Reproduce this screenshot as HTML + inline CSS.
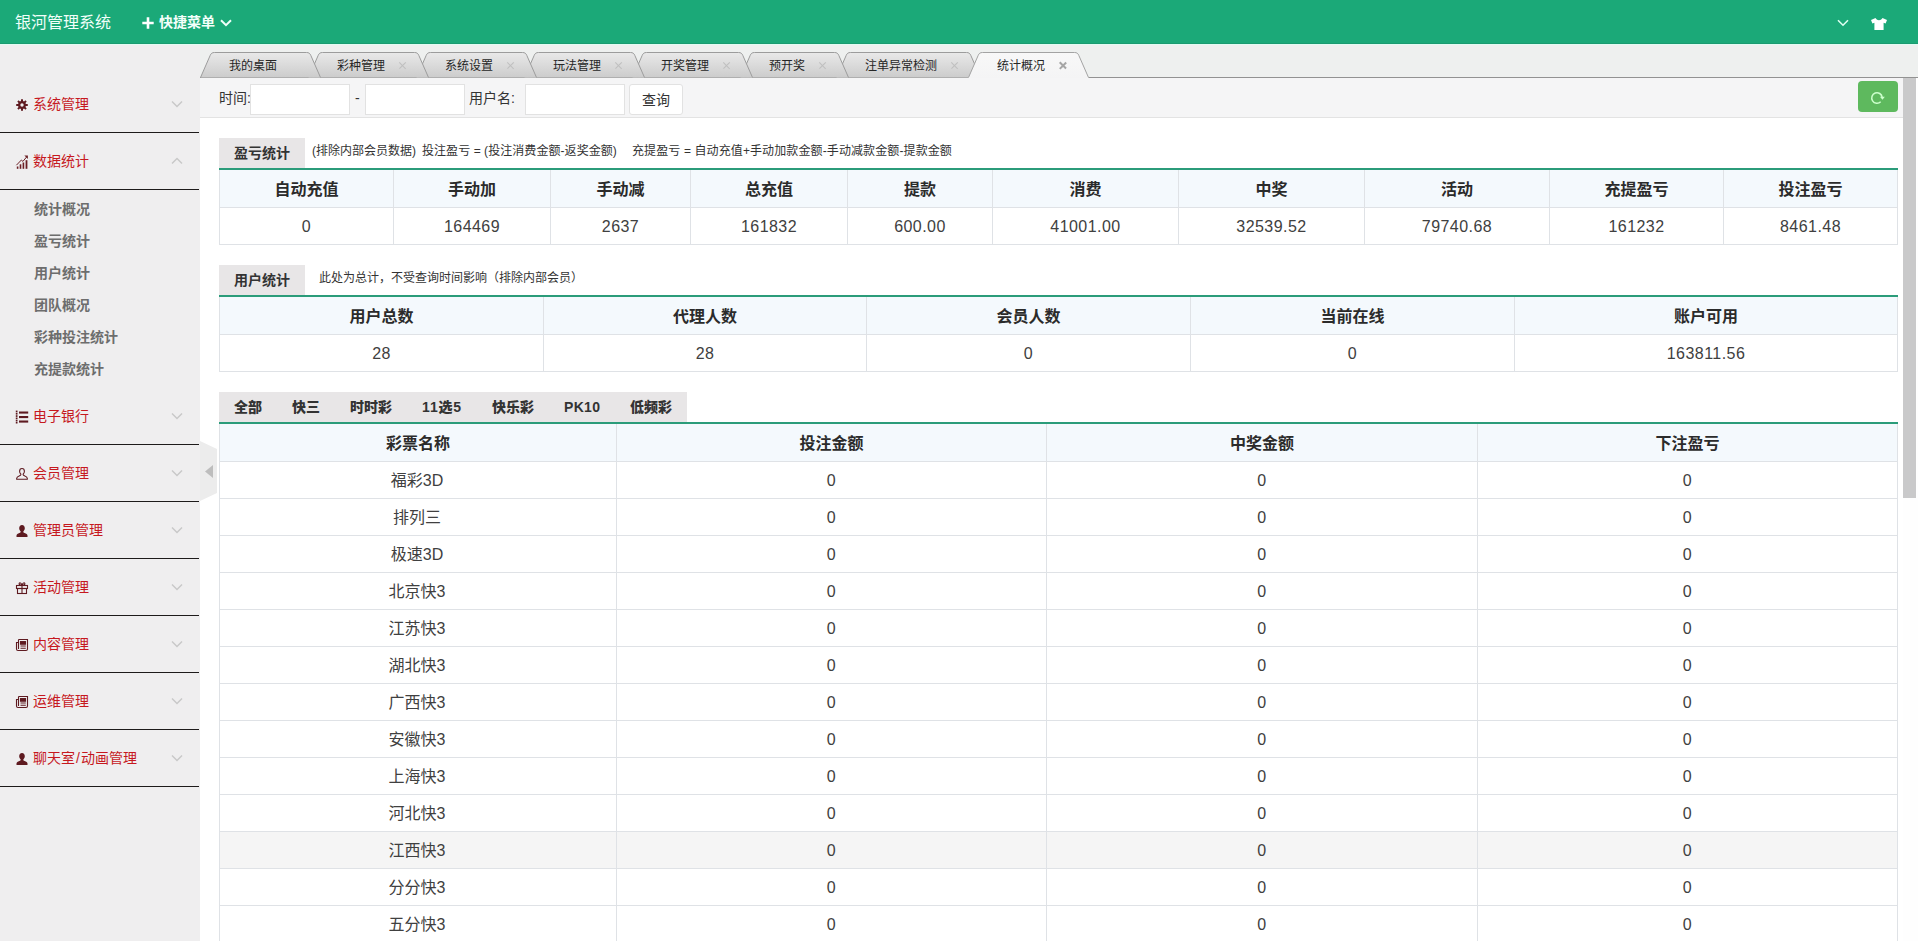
<!DOCTYPE html>
<html lang="zh-CN"><head><meta charset="utf-8"><title>银河管理系统</title>
<style>
*{box-sizing:border-box;margin:0;padding:0}
html,body{width:1918px;height:941px;overflow:hidden;background:#fff}
body{position:relative;font-family:"Liberation Sans","Noto Sans CJK SC",sans-serif;font-size:14px;color:#333}
#hd{position:absolute;left:0;top:0;width:1918px;height:44px;background:#1ba978;border-bottom:1px solid #1a9b70}
#hl{position:absolute;left:0;top:44px;width:1918px;height:1px;background:#e2fbf2;z-index:3}
#hd .logo{position:absolute;left:15px;top:1px;line-height:43px;font-size:16px;color:#f2fffa}
#hd .qm{position:absolute;left:159px;top:1px;line-height:43px;font-size:14px;color:#f4fffb;font-weight:bold}
#hd svg{position:absolute}
#side{position:absolute;left:0;top:44px;width:200px;height:897px;background:#efeeef}
.mi{position:absolute;left:0;width:199px;height:57px;border-bottom:1px solid #1d1a1a}
.mi .ic{position:absolute;left:15px;top:21.5px;width:14px;height:14px}
.mi span{position:absolute;left:33px;top:1px;line-height:55px;font-size:14px;color:#c6181e;white-space:nowrap}
.mi span i{font-style:normal;padding:0 1px}
.mi .chev{position:absolute;left:171px;top:24px;width:12px;height:8px}
.sub{position:absolute;left:34px;line-height:20px;height:20px;font-size:14px;font-weight:bold;color:#6d6d6d;white-space:nowrap}
#tabbar{position:absolute;left:200px;top:44px;width:1718px;height:34px;background:#eef0ef;border-bottom:1px solid #929292}
.tab{position:absolute;top:52px;height:26px}
.tab svg{position:absolute;left:0;top:0}
.tab span{position:absolute;top:1px;line-height:27px;font-size:12px;color:#262626;white-space:nowrap}
.tab .cx{position:absolute;top:10px;width:8px;height:8px}
.tab .cx:before,.tab .cx:after{content:"";position:absolute;left:3.4px;top:-0.6px;width:1.2px;height:9.2px;background:#bfbfbf;transform:rotate(45deg)}
.tab .cx:after{transform:rotate(-45deg)}
.tab.act .cx:before,.tab.act .cx:after{background:#a5a5a5;width:1.5px}
#flt{position:absolute;left:200px;top:78px;width:1703px;height:40px;background:#f5f5f6;border-bottom:1px solid #e3e3e3}
#flt .lb{position:absolute;top:1px;line-height:39px;font-size:14px;color:#333}
#flt .inp{position:absolute;top:6px;height:31px;width:100px;background:#fff;border:1px solid #e2e2e2}
#flt .btn{position:absolute;left:429px;top:6px;width:54px;height:31px;background:#fff;border:1px solid #e2e2e2;border-radius:3px;text-align:center;line-height:30px;font-size:14px;color:#333}
#flt .rf{position:absolute;left:1658px;top:3px;width:40px;height:31px;background:#5eb95e;border-radius:4px}
#sb{position:absolute;left:1903px;top:78px;width:15px;height:863px;background:#fefefe}
#sb i{position:absolute;left:0px;top:0;width:13px;height:420px;background:#c9c9ca}
.st{position:absolute;left:219px;height:30px;background:#e8e6e7;font-weight:bold;font-size:14px;color:#333;line-height:31px;padding:0 15px;white-space:nowrap}
.st b{margin-right:30px}
.st b:last-child{margin-right:0}
.st b.w1{display:inline-block;width:40px;letter-spacing:.8px;text-align:center}
.st b.w2{display:inline-block;width:36px;letter-spacing:.3px;text-align:center}
.t3 td:first-child{padding:0 2px 1px 0;letter-spacing:0}
.tb td{letter-spacing:.45px}
.note{position:absolute;font-size:12px;color:#333;line-height:20px;white-space:nowrap}
.gl{position:absolute;left:219px;width:1679px;height:2px;background:#2b9c7a}
.tb{position:absolute;left:219px;width:1679px;border-collapse:collapse;table-layout:fixed}
.tb th{height:37px;background:#f4f9fd;font-size:16px;font-weight:bold;color:#2b2b2b;border:1px solid #dfe2e6;border-top:none;text-align:center;padding:0}
.tb td{height:37px;font-size:16px;color:#404040;border:1px solid #dfe2e6;text-align:center;padding:2px 0 0;background:#fff}
.tb tr.hov td{background:#f5f5f5}
#hdl{position:absolute;left:200px;top:441px;width:17px;height:60px;z-index:5}
</style></head><body>
<div id="hd"><div class="logo">银河管理系统</div>
<svg style="left:142px;top:17px" width="12" height="12" viewBox="0 0 12 12"><path d="M6 0.3 V11.7 M0.3 6 H11.7" stroke="#fff" stroke-width="2.6"/></svg>
<div class="qm">快捷菜单</div>
<svg style="left:220px;top:19px" width="12" height="8" viewBox="0 0 12 8"><path d="M1 1.2 L6 6.2 L11 1.2" fill="none" stroke="#f0fff9" stroke-width="2"/></svg>
<svg style="left:1837px;top:19px" width="12" height="8" viewBox="0 0 12 8"><path d="M1 1.2 L6 6.2 L11 1.2" fill="none" stroke="#dffff2" stroke-width="1.6"/></svg>
<svg style="left:1870px;top:17px" width="18" height="14" viewBox="0 0 18 14"><path d="M5.5 1 C6.5 2.6 7.6 3.2 9 3.2 C10.4 3.2 11.5 2.6 12.5 1 L17 3 L15.6 6.5 L13.6 5.8 V13 H4.4 V5.8 L2.4 6.5 L1 3 Z" fill="#fff"/></svg>
</div>
<div id="hl"></div>
<div id="side">
</div>
<div style="position:absolute;left:0;top:0;width:200px;height:941px">
<div class="mi" style="top:76px"><svg class="ic" viewBox="0 0 14 14"><g fill="#5e1a20"><circle cx="7" cy="7" r="3.9"/><rect x="6" y="1.2" width="2" height="11.6" rx=".3"/><rect x="6" y="1.2" width="2" height="11.6" rx=".3" transform="rotate(45 7 7)"/><rect x="6" y="1.2" width="2" height="11.6" rx=".3" transform="rotate(90 7 7)"/><rect x="6" y="1.2" width="2" height="11.6" rx=".3" transform="rotate(135 7 7)"/></g><circle cx="7" cy="7" r="1.7" fill="#efeeef"/></svg><span>系统管理</span><svg class="chev" viewBox="0 0 12 8"><path d="M1 1.5 L6 6.5 L11 1.5" fill="none" stroke="#c8c8c8" stroke-width="1.4"/></svg></div>
<div class="mi" style="top:133px"><svg class="ic" viewBox="0 0 14 14"><g fill="#6b1f25"><rect x="1.8" y="11.5" width="1.6" height="2.3"/><rect x="4.7" y="9.3" width="1.6" height="4.5"/><rect x="7.6" y="7.5" width="1.6" height="6.3"/><rect x="10.6" y="5.2" width="1.8" height="8.6"/></g><path d="M1.4 10.2 L6.4 5 L7.9 6.4 L11.6 2" fill="none" stroke="#6b1f25" stroke-width="1"/><path d="M9.4 .6 H12.9 V4.1 Z" fill="#6b1f25"/></svg><span>数据统计</span><svg class="chev" viewBox="0 0 12 8"><path d="M1 6.5 L6 1.5 L11 6.5" fill="none" stroke="#c8c8c8" stroke-width="1.4"/></svg></div>
<div class="mi" style="top:388px"><svg class="ic" viewBox="0 0 14 14"><g fill="#5e1a20"><rect x="0.8" y="0.6" width="1.7" height="1.7"/><rect x="0.8" y="2.9" width="1.7" height="1.7"/><rect x="0.8" y="5.2" width="1.7" height="1.7"/><rect x="0.8" y="7.5" width="1.7" height="1.7"/><rect x="0.8" y="9.8" width="1.7" height="1.7"/><rect x="0.8" y="12" width="1.7" height="1.5"/><rect x="4" y="1.5" width="9.2" height="2.1"/><rect x="4" y="6" width="9.2" height="2.1"/><rect x="4" y="10.5" width="9.2" height="2.1"/></g></svg><span>电子银行</span><svg class="chev" viewBox="0 0 12 8"><path d="M1 1.5 L6 6.5 L11 1.5" fill="none" stroke="#c8c8c8" stroke-width="1.4"/></svg></div>
<div class="mi" style="top:445px"><svg class="ic" viewBox="0 0 14 14"><path d="M7 1.5 C5.4 1.5 4.6 2.8 4.6 4.3 C4.6 5.6 5.2 6.6 5.9 7.2 C5.9 8 5.6 8.3 4.6 8.7 C3 9.3 1.7 9.9 1.7 11.3 V12.3 H12.3 V11.3 C12.3 9.9 11 9.3 9.4 8.7 C8.4 8.3 8.1 8 8.1 7.2 C8.8 6.6 9.4 5.6 9.4 4.3 C9.4 2.8 8.6 1.5 7 1.5 Z" fill="none" stroke="#5e1a20" stroke-width="1.1"/></svg><span>会员管理</span><svg class="chev" viewBox="0 0 12 8"><path d="M1 1.5 L6 6.5 L11 1.5" fill="none" stroke="#c8c8c8" stroke-width="1.4"/></svg></div>
<div class="mi" style="top:502px"><svg class="ic" viewBox="0 0 14 14"><path d="M7 1 C5.2 1 4.2 2.5 4.2 4.3 C4.2 5.7 4.9 6.8 5.7 7.4 C5.7 8.2 5.4 8.5 4.4 8.9 C2.8 9.5 1.5 10.1 1.5 11.5 V13 H12.5 V11.5 C12.5 10.1 11.2 9.5 9.6 8.9 C8.6 8.5 8.3 8.2 8.3 7.4 C9.1 6.8 9.8 5.7 9.8 4.3 C9.8 2.5 8.8 1 7 1 Z" fill="#5e1a20"/></svg><span>管理员管理</span><svg class="chev" viewBox="0 0 12 8"><path d="M1 1.5 L6 6.5 L11 1.5" fill="none" stroke="#c8c8c8" stroke-width="1.4"/></svg></div>
<div class="mi" style="top:559px"><svg class="ic" viewBox="0 0 14 14"><g fill="none" stroke="#5e1a20" stroke-width="1.1"><rect x="1.5" y="4.5" width="11" height="3"/><rect x="2.5" y="7.5" width="9" height="5"/><path d="M7 4.5 V12.5"/><path d="M7 4.3 C5 4.3 3.6 3.4 4.2 2.3 C4.9 1.2 6.6 2.4 7 4.3 C7.4 2.4 9.1 1.2 9.8 2.3 C10.4 3.4 9 4.3 7 4.3Z"/></g></svg><span>活动管理</span><svg class="chev" viewBox="0 0 12 8"><path d="M1 1.5 L6 6.5 L11 1.5" fill="none" stroke="#c8c8c8" stroke-width="1.4"/></svg></div>
<div class="mi" style="top:616px"><svg class="ic" viewBox="0 0 14 14"><g fill="none" stroke="#5e1a20" stroke-width="1.1"><path d="M3.5 1.5 H12.5 V11 C12.5 12 12 12.5 11 12.5 H3 C2 12.5 1.5 12 1.5 11 V4.5 H3.5"/><path d="M3.5 1.5 V11"/><rect x="5.5" y="3.6" width="5" height="2.6" fill="#5e1a20"/><path d="M5.5 8 H10.8 M5.5 10.2 H10.8"/></g></svg><span>内容管理</span><svg class="chev" viewBox="0 0 12 8"><path d="M1 1.5 L6 6.5 L11 1.5" fill="none" stroke="#c8c8c8" stroke-width="1.4"/></svg></div>
<div class="mi" style="top:673px"><svg class="ic" viewBox="0 0 14 14"><g fill="none" stroke="#5e1a20" stroke-width="1.1"><path d="M3.5 1.5 H12.5 V11 C12.5 12 12 12.5 11 12.5 H3 C2 12.5 1.5 12 1.5 11 V4.5 H3.5"/><path d="M3.5 1.5 V11"/><rect x="5.5" y="3.6" width="5" height="2.6" fill="#5e1a20"/><path d="M5.5 8 H10.8 M5.5 10.2 H10.8"/></g></svg><span>运维管理</span><svg class="chev" viewBox="0 0 12 8"><path d="M1 1.5 L6 6.5 L11 1.5" fill="none" stroke="#c8c8c8" stroke-width="1.4"/></svg></div>
<div class="mi" style="top:730px"><svg class="ic" viewBox="0 0 14 14"><path d="M7 1 C5.2 1 4.2 2.5 4.2 4.3 C4.2 5.7 4.9 6.8 5.7 7.4 C5.7 8.2 5.4 8.5 4.4 8.9 C2.8 9.5 1.5 10.1 1.5 11.5 V13 H12.5 V11.5 C12.5 10.1 11.2 9.5 9.6 8.9 C8.6 8.5 8.3 8.2 8.3 7.4 C9.1 6.8 9.8 5.7 9.8 4.3 C9.8 2.5 8.8 1 7 1 Z" fill="#5e1a20"/></svg><span>聊天室<i>/</i>动画管理</span><svg class="chev" viewBox="0 0 12 8"><path d="M1 1.5 L6 6.5 L11 1.5" fill="none" stroke="#c8c8c8" stroke-width="1.4"/></svg></div>
<div class="sub" style="top:199px">统计概况</div>
<div class="sub" style="top:231px">盈亏统计</div>
<div class="sub" style="top:263px">用户统计</div>
<div class="sub" style="top:295px">团队概况</div>
<div class="sub" style="top:327px">彩种投注统计</div>
<div class="sub" style="top:359px">充提款统计</div>
</div>
<svg id="hdl" viewBox="0 0 17 60"><path d="M0 0 L17 8 V52 L0 60 Z" fill="#ececec"/><path d="M5 30.5 L13 24 V37 Z" fill="#bdbdbd"/></svg>
<div id="tabbar"></div>
<svg width="0" height="0" style="position:absolute"><defs>
<linearGradient id="gi" x1="0" y1="0" x2="0" y2="1"><stop offset="0" stop-color="#e9e9e9"/><stop offset="1" stop-color="#cccccc"/></linearGradient>
<linearGradient id="ga" x1="0" y1="0" x2="0" y2="1"><stop offset="0" stop-color="#f8f8f8"/><stop offset="1" stop-color="#f4f4f5"/></linearGradient>
</defs></svg>
<div class="tab" style="left:200px;width:121px;z-index:8"><svg width="121" height="26" viewBox="0 0 121 26"><path d="M0.5 25.5 L10.2 3.4 C11 1.4 12.2 0.5 14.5 0.5 L106.5 0.5 C108.8 0.5 110 1.4 110.8 3.4 L120.5 25.5 Z" fill="url(#gi)" stroke="none"/><path d="M0.5 25.5 L10.2 3.4 C11 1.4 12.2 0.5 14.5 0.5 L106.5 0.5 C108.8 0.5 110 1.4 110.8 3.4 L120.5 25.5" fill="none" stroke="#9c9c9c" stroke-width="1"/></svg><span style="left:29px">我的桌面</span></div>
<div class="tab" style="left:308px;width:121px;z-index:7"><svg width="121" height="26" viewBox="0 0 121 26"><path d="M0.5 25.5 L10.2 3.4 C11 1.4 12.2 0.5 14.5 0.5 L106.5 0.5 C108.8 0.5 110 1.4 110.8 3.4 L120.5 25.5 Z" fill="url(#gi)" stroke="none"/><path d="M0.5 25.5 L10.2 3.4 C11 1.4 12.2 0.5 14.5 0.5 L106.5 0.5 C108.8 0.5 110 1.4 110.8 3.4 L120.5 25.5" fill="none" stroke="#9c9c9c" stroke-width="1"/></svg><span style="left:29px">彩种管理</span><i class="cx" style="left:91px"></i></div>
<div class="tab" style="left:416px;width:121px;z-index:6"><svg width="121" height="26" viewBox="0 0 121 26"><path d="M0.5 25.5 L10.2 3.4 C11 1.4 12.2 0.5 14.5 0.5 L106.5 0.5 C108.8 0.5 110 1.4 110.8 3.4 L120.5 25.5 Z" fill="url(#gi)" stroke="none"/><path d="M0.5 25.5 L10.2 3.4 C11 1.4 12.2 0.5 14.5 0.5 L106.5 0.5 C108.8 0.5 110 1.4 110.8 3.4 L120.5 25.5" fill="none" stroke="#9c9c9c" stroke-width="1"/></svg><span style="left:29px">系统设置</span><i class="cx" style="left:91px"></i></div>
<div class="tab" style="left:524px;width:121px;z-index:5"><svg width="121" height="26" viewBox="0 0 121 26"><path d="M0.5 25.5 L10.2 3.4 C11 1.4 12.2 0.5 14.5 0.5 L106.5 0.5 C108.8 0.5 110 1.4 110.8 3.4 L120.5 25.5 Z" fill="url(#gi)" stroke="none"/><path d="M0.5 25.5 L10.2 3.4 C11 1.4 12.2 0.5 14.5 0.5 L106.5 0.5 C108.8 0.5 110 1.4 110.8 3.4 L120.5 25.5" fill="none" stroke="#9c9c9c" stroke-width="1"/></svg><span style="left:29px">玩法管理</span><i class="cx" style="left:91px"></i></div>
<div class="tab" style="left:632px;width:121px;z-index:4"><svg width="121" height="26" viewBox="0 0 121 26"><path d="M0.5 25.5 L10.2 3.4 C11 1.4 12.2 0.5 14.5 0.5 L106.5 0.5 C108.8 0.5 110 1.4 110.8 3.4 L120.5 25.5 Z" fill="url(#gi)" stroke="none"/><path d="M0.5 25.5 L10.2 3.4 C11 1.4 12.2 0.5 14.5 0.5 L106.5 0.5 C108.8 0.5 110 1.4 110.8 3.4 L120.5 25.5" fill="none" stroke="#9c9c9c" stroke-width="1"/></svg><span style="left:29px">开奖管理</span><i class="cx" style="left:91px"></i></div>
<div class="tab" style="left:740px;width:109px;z-index:3"><svg width="109" height="26" viewBox="0 0 109 26"><path d="M0.5 25.5 L10.2 3.4 C11 1.4 12.2 0.5 14.5 0.5 L94.5 0.5 C96.8 0.5 98 1.4 98.8 3.4 L108.5 25.5 Z" fill="url(#gi)" stroke="none"/><path d="M0.5 25.5 L10.2 3.4 C11 1.4 12.2 0.5 14.5 0.5 L94.5 0.5 C96.8 0.5 98 1.4 98.8 3.4 L108.5 25.5" fill="none" stroke="#9c9c9c" stroke-width="1"/></svg><span style="left:29px">预开奖</span><i class="cx" style="left:79px"></i></div>
<div class="tab" style="left:836px;width:145px;z-index:2"><svg width="145" height="26" viewBox="0 0 145 26"><path d="M0.5 25.5 L10.2 3.4 C11 1.4 12.2 0.5 14.5 0.5 L130.5 0.5 C132.8 0.5 134 1.4 134.8 3.4 L144.5 25.5 Z" fill="url(#gi)" stroke="none"/><path d="M0.5 25.5 L10.2 3.4 C11 1.4 12.2 0.5 14.5 0.5 L130.5 0.5 C132.8 0.5 134 1.4 134.8 3.4 L144.5 25.5" fill="none" stroke="#9c9c9c" stroke-width="1"/></svg><span style="left:29px">注单异常检测</span><i class="cx" style="left:115px"></i></div>
<div class="tab act" style="left:968px;width:121px;z-index:50"><svg width="121" height="26" viewBox="0 0 121 26"><path d="M0.5 25.5 L10.2 3.4 C11 1.4 12.2 0.5 14.5 0.5 L106.5 0.5 C108.8 0.5 110 1.4 110.8 3.4 L120.5 25.5 L121 26 L0 26 Z" fill="url(#ga)" stroke="none"/><path d="M0.5 25.5 L10.2 3.4 C11 1.4 12.2 0.5 14.5 0.5 L106.5 0.5 C108.8 0.5 110 1.4 110.8 3.4 L120.5 25.5" fill="none" stroke="#a3a3a3" stroke-width="1"/></svg><span style="left:29px">统计概况</span><i class="cx" style="left:91px"></i></div>
<div id="flt">
<div class="lb" style="left:19px">时间:</div><div class="inp" style="left:50px"></div>
<div class="lb" style="left:155px">-</div><div class="inp" style="left:165px"></div>
<div class="lb" style="left:269px">用户名:</div><div class="inp" style="left:325px"></div>
<div class="btn">查询</div>
<div class="rf"><svg width="40" height="31" viewBox="0 0 40 31"><path d="M22.7 20.7 A5.25 5.25 0 1 1 24.2 16.3" fill="none" stroke="#ccffcc" stroke-width="1.5"/><path d="M21.9 15.8 L26.8 15.8 L24.5 18.8 Z" fill="#ccffcc"/></svg></div>
</div>
<div id="sb"><i></i></div>

<div class="st" style="top:138px">盈亏统计</div>
<div class="note" id="n1" style="left:312px;top:141px">(排除内部会员数据)</div>
<div class="note" id="n2" style="left:422px;top:141px;letter-spacing:.06px">投注盈亏 = (投注消费金额-返奖金额)</div>
<div class="note" id="n3" style="left:632px;top:141px;letter-spacing:.11px">充提盈亏 = 自动充值+手动加款金额-手动减款金额-提款金额</div>
<div class="gl" style="top:168px"></div>
<table class="tb" style="top:170px"><colgroup><col style="width:174px"><col style="width:157px"><col style="width:140px"><col style="width:157px"><col style="width:145px"><col style="width:186px"><col style="width:186px"><col style="width:185px"><col style="width:174px"><col style="width:174px"></colgroup><thead><tr><th>自动充值</th><th>手动加</th><th>手动减</th><th>总充值</th><th>提款</th><th>消费</th><th>中奖</th><th>活动</th><th>充提盈亏</th><th>投注盈亏</th></tr></thead><tbody><tr><td>0</td><td>164469</td><td>2637</td><td>161832</td><td>600.00</td><td>41001.00</td><td>32539.52</td><td>79740.68</td><td>161232</td><td>8461.48</td></tr></tbody></table>

<div class="st" style="top:265px">用户统计</div>
<div class="note" style="left:319px;top:268px" id="n4">此处为总计，不受查询时间影响（排除内部会员）</div>
<div class="gl" style="top:295px"></div>
<table class="tb" style="top:297px"><colgroup><col style="width:324px"><col style="width:323px"><col style="width:324px"><col style="width:324px"><col style="width:383px"></colgroup><thead><tr><th>用户总数</th><th>代理人数</th><th>会员人数</th><th>当前在线</th><th>账户可用</th></tr></thead><tbody><tr><td>28</td><td>28</td><td>0</td><td>0</td><td>163811.56</td></tr></tbody></table>

<div class="st" style="top:392px"><b>全部</b><b>快三</b><b>时时彩</b><b class="w1">11选5</b><b>快乐彩</b><b class="w2">PK10</b><b>低频彩</b></div>
<div class="gl" style="top:422px"></div>
<table class="tb t3" style="top:424px"><colgroup><col style="width:397px"><col style="width:430px"><col style="width:431px"><col style="width:420px"></colgroup><thead><tr><th>彩票名称</th><th>投注金额</th><th>中奖金额</th><th>下注盈亏</th></tr></thead><tbody>
<tr><td>福彩3D</td><td>0</td><td>0</td><td>0</td></tr>
<tr><td>排列三</td><td>0</td><td>0</td><td>0</td></tr>
<tr><td>极速3D</td><td>0</td><td>0</td><td>0</td></tr>
<tr><td>北京快3</td><td>0</td><td>0</td><td>0</td></tr>
<tr><td>江苏快3</td><td>0</td><td>0</td><td>0</td></tr>
<tr><td>湖北快3</td><td>0</td><td>0</td><td>0</td></tr>
<tr><td>广西快3</td><td>0</td><td>0</td><td>0</td></tr>
<tr><td>安徽快3</td><td>0</td><td>0</td><td>0</td></tr>
<tr><td>上海快3</td><td>0</td><td>0</td><td>0</td></tr>
<tr><td>河北快3</td><td>0</td><td>0</td><td>0</td></tr>
<tr class="hov"><td>江西快3</td><td>0</td><td>0</td><td>0</td></tr>
<tr><td>分分快3</td><td>0</td><td>0</td><td>0</td></tr>
<tr><td>五分快3</td><td>0</td><td>0</td><td>0</td></tr>
</tbody></table>
</body></html>
